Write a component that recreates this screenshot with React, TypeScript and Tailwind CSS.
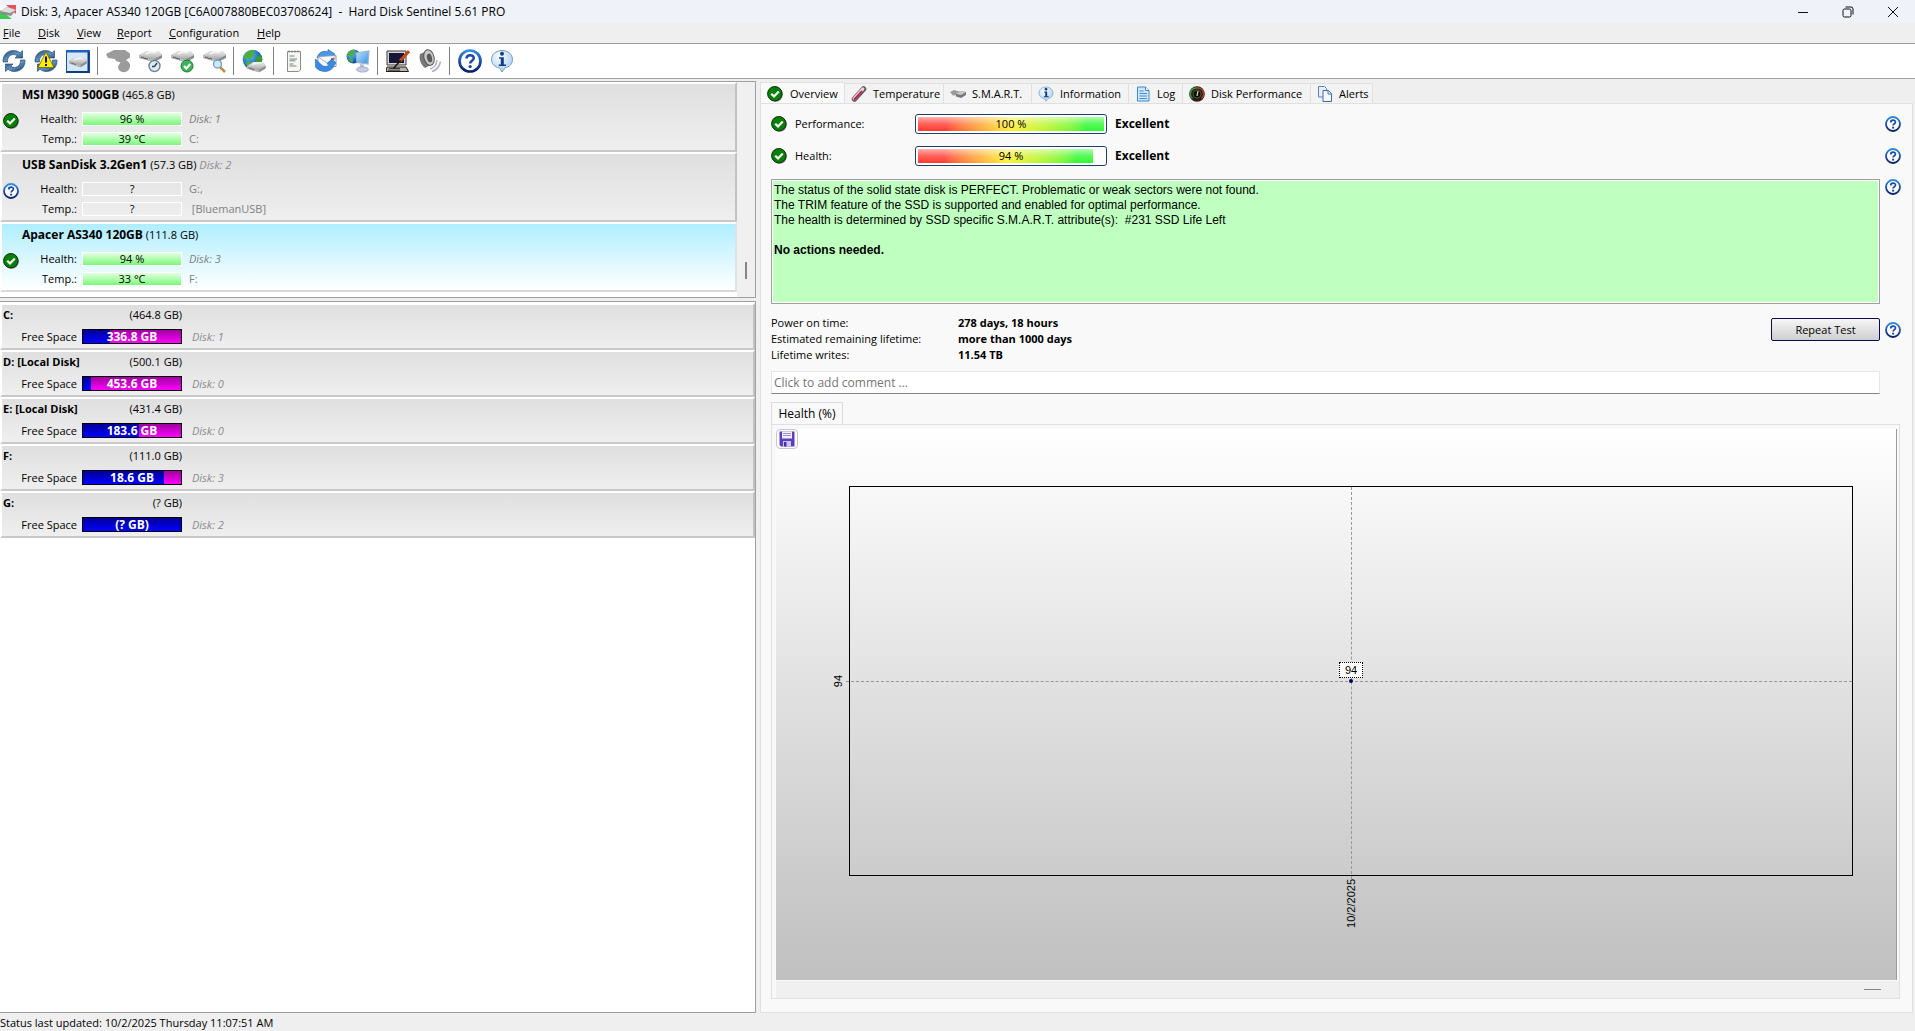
import type { ReactNode } from "react";

const disks = [
  { name: "MSI M390 500GB", size: "(465.8 GB)", tag: "", health: "96 %", temp: "39 °C", side: "Disk: 1", sideItalic: true, extra: "C:", known: true, active: false },
  { name: "USB SanDisk 3.2Gen1", size: "(57.3 GB)", tag: "Disk: 2", health: "?", temp: "?", side: "G:,", sideItalic: false, extra: " [BluemanUSB]", known: false, active: false },
  { name: "Apacer AS340 120GB", size: "(111.8 GB)", tag: "", health: "94 %", temp: "33 °C", side: "Disk: 3", sideItalic: true, extra: "F:", known: true, active: true },
];

const volumes = [
  { name: "C:", size: "(464.8 GB)", free: "336.8 GB", used: 28, disk: "Disk: 1" },
  { name: "D: [Local Disk]", size: "(500.1 GB)", free: "453.6 GB", used: 8, disk: "Disk: 0" },
  { name: "E: [Local Disk]", size: "(431.4 GB)", free: "183.6 GB", used: 57, disk: "Disk: 0" },
  { name: "F:", size: "(111.0 GB)", free: "18.6 GB", used: 83, disk: "Disk: 3" },
  { name: "G:", size: "(? GB)", free: "(? GB)", used: 100, disk: "Disk: 2" },
];

const menu = [
  { label: "File", width: "w-[35px]" },
  { label: "Disk", width: "w-[39px]" },
  { label: "View", width: "w-[40px]" },
  { label: "Report", width: "w-[52px]" },
  { label: "Configuration", width: "w-[88px]" },
  { label: "Help", width: "w-[40px]" },
];

// Shared gradients for all icons
function IconDefs() {
  return (
    <svg className="absolute size-0" aria-hidden="true">
      <defs>
        <linearGradient id="blueRing" x1="0" y1="0" x2="0" y2="1">
          <stop offset="0" stopColor="#2f8fe0" />
          <stop offset="0.5" stopColor="#1c4fae" />
          <stop offset="1" stopColor="#0a1f6b" />
        </linearGradient>
        <linearGradient id="steel" x1="0" y1="0" x2="1" y2="1">
          <stop offset="0" stopColor="#1f4670" />
          <stop offset="0.5" stopColor="#5f93c4" />
          <stop offset="1" stopColor="#17385f" />
        </linearGradient>
        <linearGradient id="metal" x1="0" y1="0" x2="0" y2="1">
          <stop offset="0" stopColor="#f2f2f2" />
          <stop offset="1" stopColor="#a4a4a4" />
        </linearGradient>
        <radialGradient id="ocean" cx="0.35" cy="0.3" r="0.8">
          <stop offset="0" stopColor="#6cc0f5" />
          <stop offset="0.6" stopColor="#1b6fc9" />
          <stop offset="1" stopColor="#0b3680" />
        </radialGradient>
        <linearGradient id="screen" x1="0" y1="0" x2="1" y2="1">
          <stop offset="0" stopColor="#b9e6ff" />
          <stop offset="1" stopColor="#3a8fe0" />
        </linearGradient>
        <radialGradient id="bubble" cx="0.4" cy="0.3" r="0.8">
          <stop offset="0" stopColor="#ffffff" />
          <stop offset="1" stopColor="#9cc8ee" />
        </radialGradient>
      </defs>
    </svg>
  );
}

function Svg({ children, size = "size-6", box = "0 0 24 24" }: { children: ReactNode; size?: string; box?: string }) {
  return (
    <svg className={`${size} block shrink-0`} viewBox={box} fill="none" aria-hidden="true">
      {children}
    </svg>
  );
}

function CheckIcon() {
  return (
    <Svg size="size-4" box="0 0 16 16">
      <circle cx="8.6" cy="8.6" r="7.2" fill="#777" />
      <circle cx="7.8" cy="7.7" r="7.2" fill="#068006" stroke="#0a300a" />
      <path d="M4.2 7.8 7 10.4l4.8-5" stroke="#fff" strokeWidth="2.2" />
    </Svg>
  );
}

function HelpIcon({ size = "size-4" }: { size?: string }) {
  return (
    <Svg size={size} box="0 0 16 16">
      <circle cx="8" cy="8" r="7" fill="#fff" stroke="url(#blueRing)" strokeWidth="1.8" />
      <path d="M5.7 6.4c0-3 4.8-3 4.8-.3 0 1.7-2.4 1.7-2.4 3.5" stroke="#1c48a8" strokeWidth="1.7" />
      <circle cx="8.1" cy="11.7" r="1.1" fill="#1c48a8" />
    </Svg>
  );
}

function InfoIcon({ size = "size-6" }: { size?: string }) {
  return (
    <Svg size={size}>
      <path d="M12 1.5c6 0 10.500 3.800 10.500 9 0 4.500-3.300 7.500-7.500 8.400L12 23l-2.500-4.100C5 18.200 1.500 15 1.500 10.500c0-5.200 4.500-9 10.500-9Z" fill="url(#bubble)" stroke="#7c9cbc" />
      <circle cx="12" cy="4.8" r="2" fill="#0d3f8c" />
      <path d="M9 8.200h4.800v7.300H16V17H8.800v-1.500h2V9.700H9Z" fill="#0d3f8c" />
    </Svg>
  );
}

function DriveShape() {
  return (
    <>
      <path d="M1 6.500 9 2h11l4 4v3l-8 4-15-4Z" fill="#8a8a8a" />
      <path d="M1 6.500 9 2h11l4 4-8 4.500Z" fill="url(#metal)" />
      <path d="M1 6.500v2.500L16 13v-2.500Z" fill="#b9b9b9" />
      <path d="m3 8.200 7 2" stroke="#5c5c5c" />
      <path d="m8 5 5-2h5" stroke="#fff" />
    </>
  );
}

function RefreshShape() {
  return (
    <>
      <path d="M1 13C.5 6.500 5 1.500 11.500 1.500c2.500 0 4.800.8 6.500 2.300L20.500 1.500V9H13l2.200-2.300C11 3.800 5 6.500 5.500 13Z" fill="url(#steel)" stroke="#1c3c60" strokeWidth="0.6" />
      <path d="M23 11c.5 6.500-4 11.500-10.500 11.500-2.500 0-4.800-.8-6.500-2.300L3.500 22.500V15H11l-2.200 2.300C13 20.200 19 17.500 18.500 11Z" fill="url(#steel)" stroke="#1c3c60" strokeWidth="0.6" />
    </>
  );
}

function GlobeShape() {
  return (
    <>
      <circle cx="10.5" cy="10.5" r="9.8" fill="url(#ocean)" />
      <path d="M4 4c3-3 7-3.300 9-2.800L11.500 4 13 6l-3 2-1 3-4-2-2.500 1C1.500 8 2.500 5.500 4 4Z" fill="#4fae3e" />
      <path d="m14 8 5-2c1.500 3 1.600 6 0 9l-3 1-2.500-4Z" fill="#3c9a35" />
      <path d="m5 12 4.500 1.500L9 19c-3-.8-5-3-5.500-5Z" fill="#4fae3e" />
    </>
  );
}

const tools: (null | { label: string; icon: ReactNode })[] = [
  { label: "Refresh", icon: <Svg><RefreshShape /></Svg> },
  {
    label: "Refresh problems",
    icon: (
      <Svg>
        <RefreshShape />
        <path d="M12 3 20 18.500H4Z" fill="#ffee00" stroke="#6e6600" strokeWidth="0.8" />
        <path d="M12 7.500v6M12 15v2" stroke="#111" strokeWidth="2" />
      </Svg>
    ),
  },
  {
    label: "Disk window",
    icon: (
      <Svg>
        <rect x="0.5" y="1.5" width="23" height="22" fill="#d3e8fb" stroke="#1a4fa8" />
        <path d="M0 1h24v2.500H0Z" fill="#1f5fc4" />
        <path d="M22.500 3v20H1" stroke="#123a80" strokeWidth="2" />
        <g transform="translate(2.5 6.5) scale(0.76 0.9)"><DriveShape /></g>
      </Svg>
    ),
  },
  null,
  {
    label: "Surface test",
    icon: (
      <Svg>
        <path d="M0 5 8 1h11l5 3.500v4L20 11l2 1.500c3 2 2.500 6.500 0 9-2.500 2.500-7 2-9-.5-1.500-2-1-4.500.5-6l1-1.500L10 12l-1-2-7-1Z" fill="#9b9b9b" />
      </Svg>
    ),
  },
  {
    label: "Short test",
    icon: (
      <Svg>
        <DriveShape />
        <circle cx="16.5" cy="17" r="5.5" fill="#dceaf2" stroke="#71838f" strokeWidth="1.4" />
        <path d="M16.500 17.500 19 14M16.500 17.500H14" stroke="#21415c" strokeWidth="1.3" />
      </Svg>
    ),
  },
  {
    label: "Extended test",
    icon: (
      <Svg>
        <DriveShape />
        <circle cx="17" cy="17" r="6" fill="#3fb45a" stroke="#1f7a38" />
        <path d="m14 17 2.300 2.500 4-4.500" stroke="#fff" strokeWidth="2" />
      </Svg>
    ),
  },
  {
    label: "Disk details",
    icon: (
      <Svg>
        <DriveShape />
        <path d="m18 18 5 5" stroke="#c98a3a" strokeWidth="2.5" />
        <circle cx="15.5" cy="15" r="4" fill="#cfe9fb" stroke="#6d9cc4" strokeWidth="1.3" />
      </Svg>
    ),
  },
  null,
  {
    label: "Online",
    icon: (
      <Svg>
        <GlobeShape />
        <g transform="translate(4 11) scale(0.82 0.95)"><DriveShape /></g>
      </Svg>
    ),
  },
  null,
  {
    label: "Report",
    icon: (
      <Svg>
        <path d="M5.500 2.500h13v18.500l-2 1.500h-11Z" fill="#f7f7f2" stroke="#8d8d86" />
        <path d="M7 1.500v2M10 1.500v2M13 1.500v2M16 1.500v2" stroke="#777" strokeWidth="1.2" />
        <path d="M7.500 7h5M7.500 10h7.500M7.500 11.800h6M7.500 15h4M7.500 17h7" stroke="#77808a" />
      </Svg>
    ),
  },
  {
    label: "Send mail",
    icon: (
      <Svg>
        <path d="M3 9C4 4 9 1 14 3V.5L21 5l-6 4.500V7C12 6 9 7 8 9Z" fill="#4a98e8" stroke="#1b5fb4" strokeWidth="0.6" />
        <path d="m4 7.500 18-1v11l-18 1Z" fill="#f6f9fc" stroke="#7f9cba" />
        <path d="m4.500 8 8.500 6 9-7" stroke="#9fb4c8" />
        <path d="M17 9h3.500v2H17Z" fill="#c85c3a" />
        <path d="M1.500 10v8c2 3 6 4.500 10 4.500 4.500-.5 8-3 9-7.500l1.500-1-4-4-5 5 2.500.5c-2 2.500-6 2.500-8 .5Z" fill="#3b8ae2" stroke="#1b5fb4" strokeWidth="0.6" />
      </Svg>
    ),
  },
  {
    label: "Network",
    icon: (
      <Svg>
        <g transform="scale(0.72)"><GlobeShape /></g>
        <path d="m10 4 13-2-1 13-11-1.500Z" fill="url(#screen)" stroke="#9bb4cc" strokeWidth="1.2" />
        <path d="m14 15 4 .5v3h-4Z" fill="#b9c3dd" />
        <ellipse cx="16.5" cy="20.5" rx="6" ry="2.6" fill="#c4cce8" stroke="#8a93b8" strokeWidth="0.7" />
      </Svg>
    ),
  },
  null,
  {
    label: "Configuration",
    icon: (
      <Svg>
        <path d="M1 2h19v14H1Z" fill="#d8d4cc" stroke="#3c3c3c" />
        <path d="M3 4h15v10H3Z" fill="#16163a" />
        <path d="M1 18h19l2.500 4.500H0Z" fill="#b8b4ac" stroke="#1c1c1c" />
        <path d="M3 19.500h11M2 21.200h12" stroke="#3c3c3c" />
        <path d="M23 2 14 12" stroke="#c04a1c" strokeWidth="3.2" />
        <path d="m14.500 11.500-7 8" stroke="#1c1c1c" strokeWidth="1.6" />
      </Svg>
    ),
  },
  {
    label: "Sound",
    icon: (
      <Svg>
        <path d="M2 5 11 1c4 2 6 8 4 14l-8 4C3 16 .5 10 2 5Z" fill="#777" />
        <ellipse cx="11" cy="8.5" rx="5" ry="8" transform="rotate(-14 11 8.500)" fill="#c9c9c9" stroke="#555" />
        <ellipse cx="11.5" cy="9" rx="2.5" ry="4.5" transform="rotate(-14 11.500 9)" fill="#5a5a5a" />
        <path d="M12 20c4-1 6.500-4 7-9M14 22.500c5-1.500 7.500-5 8.500-10" stroke="#b0b0cc" strokeWidth="1.6" />
      </Svg>
    ),
  },
  null,
  { label: "Help", icon: <HelpIcon size="size-6" /> },
  { label: "About", icon: <InfoIcon /> },
];

const tabs = [
  {
    label: "Temperature",
    width: "w-[99px]",
    icon: (
      <Svg size="size-4" box="0 0 16 16">
        <path d="m3.500 13 9-10" stroke="#5f5560" strokeWidth="5.5" strokeLinecap="round" />
        <path d="m3.300 12.500 8.500-9.500" stroke="#f0d3dc" strokeWidth="3.2" strokeLinecap="round" />
        <path d="m3.500 13.200 7-7.700" stroke="#c2184e" strokeWidth="1.8" strokeLinecap="round" />
      </Svg>
    ),
  },
  {
    label: "S.M.A.R.T.",
    width: "w-[88px]",
    icon: (
      <Svg size="size-4" box="0 0 16 16">
        <path d="m0 6 4-2 5 1.500L8 9 3 9.500Z" fill="#9a9a9a" />
        <path d="m6 8 4-3 6 1v3l-5 3-5-1.500Z" fill="#777" />
        <path d="m6 8 4-3 6 1-5 3Z" fill="#c9c9c9" />
      </Svg>
    ),
  },
  { label: "Information", width: "w-[97px]", icon: <InfoIcon size="size-4" /> },
  {
    label: "Log",
    width: "w-[54px]",
    icon: (
      <Svg size="size-4" box="0 0 16 16">
        <path d="M2.500 1h8l3.500 3.500V15H2.500Z" fill="#cfe6fb" stroke="#3c86cc" />
        <path d="M10.500 1v3.500H14" fill="#fff" stroke="#3c86cc" />
        <path d="M4.500 5h4M4.500 7.500H12M4.500 10H12M4.500 12.500H12" stroke="#3f8ed8" />
      </Svg>
    ),
  },
  {
    label: "Disk Performance",
    width: "w-[128px]",
    icon: (
      <Svg size="size-4" box="0 0 16 16">
        <circle cx="8" cy="8" r="7.8" fill="#2b1c16" />
        <path d="M3.500 12.500A6 6 0 0 1 8 2" stroke="#2f9a3c" strokeWidth="1.5" />
        <path d="M8 2a6 6 0 0 1 4.500 10.500" stroke="#a8402c" strokeWidth="1.5" />
        <circle cx="8" cy="8" r="4" fill="#0c0c0c" stroke="#3d5a33" />
        <path d="m8 10 1-5" stroke="#e8e0a0" strokeWidth="1.2" />
      </Svg>
    ),
  },
  {
    label: "Alerts",
    width: "w-[62px]",
    icon: (
      <Svg size="size-4" box="0 0 16 16">
        <path d="M1.500.5h6l2 2V11h-8Z" fill="#e8effb" stroke="#5b82c4" />
        <path d="M6 4.500h5.500L14.500 7.500V15.500H6Z" fill="#f6f9ff" stroke="#3f68b4" />
        <path d="M11 4.500V8h3.500" stroke="#3f68b4" />
      </Svg>
    ),
  },
];

function TitleBar() {
  return (
    <header className="flex h-[23px] items-center bg-[#eff2f9]">
      <Svg size="size-4" box="0 0 16 16">
        <path d="M0 1h8L0 9Z" fill="#fff" />
        <path d="M6 1h10v9Z" fill="#e8505a" />
        <path d="M0 6v9h12Z" fill="#3ecb52" />
        <path d="m0 7 7-4 9 3-5 6-10-2Z" fill="#8d8d8d" />
        <path d="m0 7 7-4 9 3-6 3Z" fill="#dedede" />
      </Svg>
      <h1 className="grow pl-[5px] text-[12px] whitespace-pre">Disk: 3, Apacer AS340 120GB [C6A007880BEC03708624]  -  Hard Disk Sentinel 5.61 PRO</h1>
      <button aria-label="Minimize" className="flex h-full w-[45px] items-center justify-center">
        <Svg size="size-3" box="0 0 12 12"><path d="M1 6.500h10" stroke="#111" /></Svg>
      </button>
      <button aria-label="Restore" className="flex h-full w-[45px] items-center justify-center">
        <Svg size="size-3" box="0 0 12 12">
          <rect x="1" y="3" width="8" height="8" rx="1.5" stroke="#111" />
          <path d="M3.500 1H9a2 2 0 0 1 2 2v5.500" stroke="#111" />
        </Svg>
      </button>
      <button aria-label="Close" className="flex h-full w-[45px] items-center justify-center">
        <Svg size="size-3" box="0 0 12 12"><path d="m1 1 10 10M11 1 1 11" stroke="#111" /></Svg>
      </button>
    </header>
  );
}

function DiskBar({ label, value, known }: { label: string; value: string; known: boolean }) {
  return (
    <>
      <span className="w-[55px] text-right">{label}</span>
      <span className={`ml-[5px] flex h-3.5 w-[100px] items-center justify-center border border-white ${known ? "bg-linear-to-b from-[#e0ffe0] to-[#78f878]" : ""}`}>
        {value}
      </span>
    </>
  );
}

function DiskList() {
  return (
    <section className="flex h-[217px] border border-l-0 border-[#a0a0a0] bg-white">
      <ul className="grow">
        {disks.map((d) => (
          <li
            key={d.name}
            className={`flex h-[70px] border-2 border-t-white border-l-white bg-linear-to-b ${
              d.active ? "border-r-[#d8e4e8] border-b-[#d9d9d9] from-[#aeeeff] to-white" : "border-r-[#c2c2c2] border-b-[#c8c8c8] from-[#dfdfdf] to-[#efefef]"
            }`}
          >
            <div className="flex w-5 items-center px-px pt-2">{d.known ? <CheckIcon /> : <HelpIcon />}</div>
            <div className="grow">
              <h2 className="h-[25px] leading-[21px]">
                <b className="text-[12px]">{d.name}</b> {d.size} <i className="text-[#8a8a8a]">{d.tag}</i>
              </h2>
              <div className="flex h-5 items-center">
                <DiskBar label="Health:" value={d.health} known={d.known} />
                <span className={`ml-[7px] text-[#808080] ${d.sideItalic ? "italic" : ""}`}>{d.side}</span>
              </div>
              <div className="flex h-5 items-center">
                <DiskBar label="Temp.:" value={d.temp} known={d.known} />
                <span className="ml-[7px] whitespace-pre text-[#808080]">{d.extra}</span>
              </div>
            </div>
          </li>
        ))}
      </ul>
      <div className="flex w-[18px] items-end justify-center bg-[#f0f0f0] pb-[18px]">
        <div className="h-[17px] w-0.5 bg-[#868686]" />
      </div>
    </section>
  );
}

function VolumeList() {
  return (
    <section className="mt-[3px] grow border border-l-0 border-[#a0a0a0] bg-white pt-px">
      <ul>
        {volumes.map((v) => (
          <li key={v.name} className="h-[47px] border-2 border-t-white border-r-[#c2c2c2] border-b-[#c8c8c8] border-l-white bg-linear-to-b from-[#dfdfdf] to-[#efefef]">
            <div className="flex h-5 w-[180px] items-center justify-between pl-px">
              <b>{v.name}</b>
              <span>{v.size}</span>
            </div>
            <div className="flex h-[23px] items-center">
              <span className="w-[75px] text-right">Free Space</span>
              <div className="relative ml-[5px] h-[15px] w-[100px] border border-black bg-linear-to-b from-[#a000a0] to-[#ff00ff]">
                <div className="h-full bg-linear-to-b from-[#000098] to-[#0000ff]" style={{ width: `${v.used}%` }} />
                <b className="absolute inset-0 text-center text-[12px] leading-[14px] text-white">{v.free}</b>
              </div>
              <i className="ml-2.5 text-[#8a8a8a]">{v.disk}</i>
            </div>
          </li>
        ))}
      </ul>
    </section>
  );
}

function HelpButton() {
  return (
    <button aria-label="Help" className="ml-[5px] shrink-0">
      <HelpIcon />
    </button>
  );
}

function Meter({ label, value }: { label: string; value: number }) {
  return (
    <div className="flex h-8 items-center">
      <CheckIcon />
      <span className="w-[128px] pl-2">{label}</span>
      <div className="relative h-5 w-[192px] rounded-[3px] border border-[#1c3f6e] bg-white p-0.5">
        <div className="h-full bg-linear-to-r from-[#ff3a30] from-15% via-[#ffef30] to-[#30f830] to-90%" style={{ width: `${value}%` }}>
          <div className="h-full bg-linear-to-b from-white/60 via-white/20 to-white/0" />
        </div>
        <span className="absolute inset-0 text-center leading-[18px]">{value} %</span>
      </div>
      <b className="grow pl-2 text-[12px]">Excellent</b>
      <HelpButton />
    </div>
  );
}

function HealthChart() {
  return (
    <div className="mt-2 flex grow flex-col">
      <div role="tablist" className="flex">
        <button role="tab" aria-selected="true" className="-mb-px h-[23px] w-[72px] border border-b-0 border-[#dcdcdc] bg-[#f9f9f9] text-[12px]">
          Health (%)
        </button>
      </div>
      <div className="flex grow flex-col border border-[#e0e0e0] pt-1 pl-1">
        <div className="mr-0.5 flex grow flex-col border-r border-[#9c9c9c] bg-linear-to-b from-white to-[#c0c0c0] pr-[43px] pb-[104px]">
          <button aria-label="Save chart" className="flex h-5 w-[22px] items-center justify-center rounded-sm border border-[#c8c8c8] bg-[#fdfdfd]">
            <Svg size="size-4" box="0 0 16 16">
              <path d="M.5.5h15v15H2L.5 14Z" fill="#5b3fc0" />
              <path d="M3 .5h10v7H3Z" fill="#f1effb" />
              <path d="M4 2.500h8M4 4.500h8" stroke="#9a8fd0" />
              <path d="M4 10h8v5.500H4Z" fill="#cdc6ee" />
              <path d="M5 11h2.500v4.500H5Z" fill="#4a30a8" />
            </Svg>
          </button>
          <div className="mt-[37px] ml-[73px] flex grow font-[Liberation_Sans,sans-serif]">
            {/* plot area, one sample in the middle */}
            <div className="relative grow border border-black">
              <div className="absolute top-1/2 right-0 -left-1 border-t border-dashed border-[#989898]" />
              <div className="absolute top-0 -bottom-1 left-1/2 border-l border-dashed border-[#989898]" />
              <span className="absolute top-1/2 left-1/2 size-1 -translate-x-1/2 -translate-y-1/2 rounded-full bg-[#000060]" />
              <span className="absolute bottom-1/2 left-1/2 mb-[3px] h-4 w-6 -translate-x-1/2 border border-dotted border-black bg-white text-center leading-[14px]">94</span>
              <span className="absolute top-1/2 right-full mr-1 -translate-y-1/2 rotate-180 [writing-mode:vertical-rl]">94</span>
              <span className="absolute top-full left-1/2 mt-1 -translate-x-1/2 rotate-180 [writing-mode:vertical-rl]">10/2/2025</span>
            </div>
          </div>
        </div>
        <div className="mt-px flex h-[17px] items-center justify-end bg-[#f0f0f0] pr-[18px]">
          <div className="h-px w-[17px] bg-[#868686]" />
        </div>
      </div>
    </div>
  );
}

function Overview() {
  return (
    <div className="mr-0.5 flex grow flex-col border border-[#e0e0e0] bg-[#f9f9f9] pt-1 pb-[13px] pl-2.5">
      <div className="pr-[11px]">
        <Meter label="Performance:" value={100} />
        <Meter label="Health:" value={94} />
        <div className="mt-[7px] flex items-start">
          <div className="h-[125px] grow border border-[#a0a0a0] bg-white p-px">
            <div className="h-full bg-[#bfffbf] px-px py-0.5 font-[Liberation_Sans,sans-serif] text-[12px] leading-[15px] whitespace-pre-wrap">
              <p>The status of the solid state disk is PERFECT. Problematic or weak sectors were not found.</p>
              <p>The TRIM feature of the SSD is supported and enabled for optimal performance.</p>
              <p>{"The health is determined by SSD specific S.M.A.R.T. attribute(s):  #231 SSD Life Left"}</p>
              <p className="mt-[15px] font-bold">No actions needed.</p>
            </div>
          </div>
          <HelpButton />
        </div>
        <div className="mt-[11px] flex items-start">
          <dl className="grid grow grid-cols-[187px_1fr] leading-4">
            <dt>Power on time:</dt>
            <dd className="font-bold">278 days, 18 hours</dd>
            <dt>Estimated remaining lifetime:</dt>
            <dd className="font-bold">more than 1000 days</dd>
            <dt>Lifetime writes:</dt>
            <dd className="font-bold">11.54 TB</dd>
          </dl>
          <div className="mt-[3px] flex items-center">
            <button className="h-[23px] w-[109px] rounded-[2px] border border-[#0a0a5c] bg-linear-to-b from-[#f6f6f6] to-[#cfcfcf]">Repeat Test</button>
            <HelpButton />
          </div>
        </div>
        <div className="mt-2 flex pr-[21px]">
          <input
            aria-label="Comment"
            placeholder="Click to add comment ..."
            className="h-[23px] grow border border-[#e6e6e6] border-b-[#868686] bg-white px-0.5 text-[12px] placeholder:text-[#757575]"
          />
        </div>
      </div>
      <div className="flex grow flex-col pr-3">
        <HealthChart />
      </div>
    </div>
  );
}

export default function App() {
  return (
    <div className="flex min-h-screen flex-col bg-[#efefef] font-[Open_Sans,Noto_Sans,sans-serif] text-[11px] leading-4 text-black">
      <IconDefs />
      <TitleBar />
      <nav className="flex h-5 items-center pl-[3px]">
        {menu.map((m) => (
          <button key={m.label} className={`${m.width} text-left`}>
            <u>{m.label[0]}</u>
            {m.label.slice(1)}
          </button>
        ))}
      </nav>
      <div className="flex h-9 items-center border-y border-[#a0a0a0] bg-white pl-0.5">
        {tools.map((t, i) =>
          t ? (
            <button key={t.label} aria-label={t.label} className="mr-2">
              {t.icon}
            </button>
          ) : (
            <span key={i} className="mr-2 -ml-px h-7 w-px bg-[#808080]" />
          )
        )}
      </div>
      <main className="flex grow pt-0.5">
        <div className="flex w-[756px] shrink-0 flex-col">
          <DiskList />
          <VolumeList />
        </div>
        <div className="ml-1 flex grow flex-col pt-px">
          <div role="tablist" className="flex items-end">
            <button role="tab" aria-selected="true" className="-mb-px flex h-[22px] w-[85px] items-center border border-b-0 border-[#e0e0e0] bg-[#f9f9f9] pl-1.5">
              <CheckIcon />
              <span className="pl-[7px]">Overview</span>
            </button>
            {tabs.map((t) => (
              <button key={t.label} role="tab" aria-selected="false" className={`${t.width} flex h-5 items-center gap-1.5 border border-b-0 border-l-0 border-[#e0e0e0] bg-[#f3f3f3] pl-1.5 whitespace-nowrap`}>
                {t.icon}
                {t.label}
              </button>
            ))}
          </div>
          <Overview />
        </div>
      </main>
      <footer className="h-[18px] leading-5">Status last updated: 10/2/2025 Thursday 11:07:51 AM</footer>
    </div>
  );
}
